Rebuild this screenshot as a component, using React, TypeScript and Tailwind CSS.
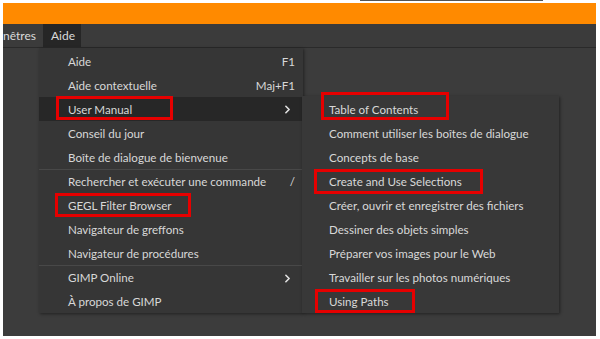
import { ChevronRight } from "lucide-react";

type Item = { label: string; shortcut?: string; sub?: boolean; active?: boolean; sep?: boolean };

const helpItems: Item[] = [
  { label: "Aide", shortcut: "F1" },
  { label: "Aide contextuelle", shortcut: "Maj+F1" },
  { label: "User Manual", sub: true, active: true },
  { label: "Conseil du jour" },
  { label: "Boîte de dialogue de bienvenue" },
  { label: "Rechercher et exécuter une commande", shortcut: "/", sep: true },
  { label: "GEGL Filter Browser" },
  { label: "Navigateur de greffons" },
  { label: "Navigateur de procédures" },
  { label: "GIMP Online", sub: true, sep: true },
  { label: "À propos de GIMP" },
];

const manualItems = [
  "Table of Contents",
  "Comment utiliser les boîtes de dialogue",
  "Concepts de base",
  "Create and Use Selections",
  "Créer, ouvrir et enregistrer des fichiers",
  "Dessiner des objets simples",
  "Préparer vos images pour le Web",
  "Travailler sur les photos numériques",
  "Using Paths",
];

function MenuRow({ item }: { item: Item }) {
  return (
    <div
      className={`flex h-[24px] items-center pl-[29px] pr-[8px] pt-[1px] ${
        item.sep ? "border-t border-[#484848]" : ""
      } ${item.active ? "bg-[#272727]" : ""}`}
    >
      <span className="flex-1">{item.label}</span>
      {item.shortcut && <span>{item.shortcut}</span>}
      {item.sub && <ChevronRight size={13} strokeWidth={3} className="mr-[1px] text-[#e0e0e0]" />}
    </div>
  );
}

export default function App() {
  return (
    <div
      className="relative flex h-[339px] w-[600px] flex-col overflow-hidden bg-white pb-[3px] pl-[3px] pr-[4px] pt-[3px] text-[11.6px] text-[#d8d8d8]"
      style={{ fontFamily: "Lato, 'Noto Sans', sans-serif" }}
    >
      <div className="absolute left-[360px] top-0 h-[1px] w-[183px] bg-[#555]" />
      <div className="h-[21px] bg-[#ff8a00]" />

      <div className="flex h-[23px] items-stretch bg-[#3b3b3b] text-[12px] text-[#dadada]">
        <div className="flex items-center pr-[7px]">nêtres</div>
        <div className="flex w-[38px] items-center bg-[#262626] pl-[8px]">Aide</div>
      </div>

      <div className="relative flex-1 border-t border-[#2a2a2a] bg-[#3c3c3c]">
        <div className="absolute left-[36px] top-0 w-[264px] bg-[#363636] pt-[1px] shadow-[1px_1px_3px_rgba(0,0,0,0.45)]">
          {helpItems.map((it) => (
            <MenuRow key={it.label} item={it} />
          ))}
        </div>

        <div className="absolute left-[299px] top-[48px] w-[257px] bg-[#383838] pt-[1px] shadow-[1px_1px_3px_rgba(0,0,0,0.45)]">
          {manualItems.map((l) => (
            <div key={l} className="flex h-[24px] items-center pl-[27px] pt-[1px]">
              {l}
            </div>
          ))}
        </div>

        {/* annotations */}
        <div className="absolute left-[53px] top-[48px] h-[24px] w-[117px] border-[3px] border-[#e60000]" />
        <div className="absolute left-[52px] top-[145px] h-[24px] w-[136px] border-[3px] border-[#e60000]" />
        <div className="absolute left-[318px] top-[44px] h-[28px] w-[128px] border-[3px] border-[#e60000]" />
        <div className="absolute left-[311px] top-[121px] h-[25px] w-[169px] border-[3px] border-[#e60000]" />
        <div className="absolute left-[312px] top-[241px] h-[24px] w-[100px] border-[3px] border-[#e60000]" />
      </div>
    </div>
  );
}
